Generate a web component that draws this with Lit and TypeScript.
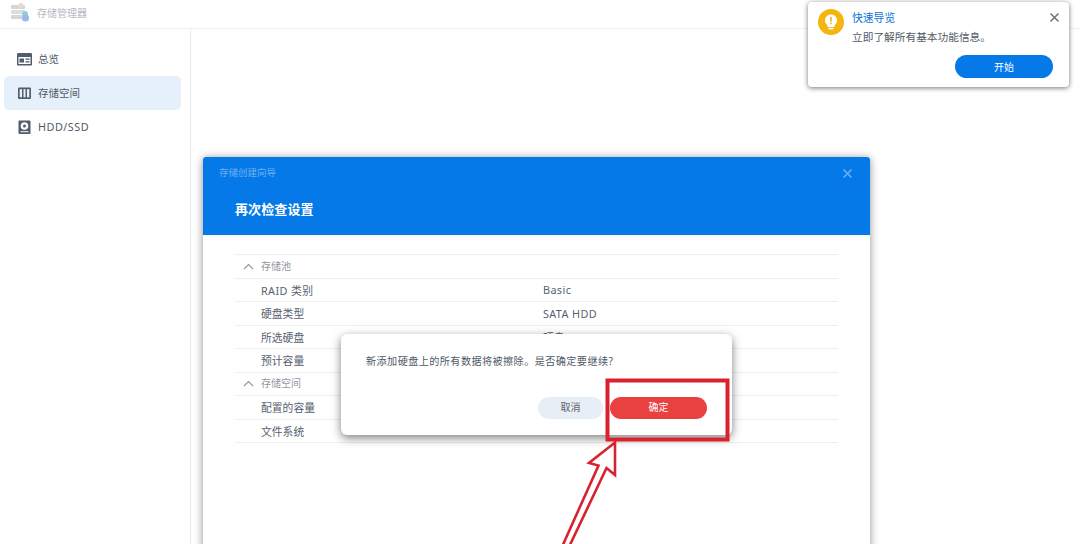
import { LitElement, html, css } from "lit";
import { customElement } from "lit/decorators.js";

@customElement("app-root")
export class AppRoot extends LitElement {
  static styles = css`
    :host { display: block; width: 1080px; height: 544px; position: relative; overflow: hidden; background: #fff; font-family: "Noto Sans", "Noto Sans CJK SC", sans-serif; color: #4f5a68; }
    .app { display: flex; flex-direction: column; height: 544px; }
    .title { height: 28px; flex: none; display: flex; align-items: center; padding-left: 10px; gap: 7px; border-bottom: 1px solid #eef0f2; font-size: 10px; color: #b4b9bf; box-sizing: content-box; }
    .title span { position: relative; top: -2px; }
    .title svg { position: relative; top: -2px; }
    .main { flex: 1; display: flex; }
    .side { border-right: 1px solid #e8ebee; padding: 13px 9px 0 4px; box-sizing: content-box; width: 177px; display: flex; flex-direction: column; }
    .item { height: 34px; display: flex; align-items: center; gap: 6px; padding-left: 12px; font-size: 10.5px; border-radius: 5px; color: #505a66; }
    .item span { position: relative; top: -1px; }
    .item.latin { letter-spacing: .5px; font-size: 10.8px; }
    .item svg { width: 16px; height: 16px; flex: none; }
    .item.on { background: #e5f0fb; }
    .wiz { position: absolute; left: 203px; top: 157px; width: 667px; height: 420px; background: #fff; box-shadow: 0 1px 8px rgba(0,0,0,.45); border-radius: 3px 3px 0 0; }
    .head { height: 78px; background: #0679e8; color: #fff; padding: 10px 16px 0 16px; box-sizing: border-box; position: relative; border-radius: 3px 3px 0 0; }
    .crumb { font-size: 9.5px; color: #6db1f2; line-height: 12px; }
    .h { font-size: 13px; font-weight: 700; margin: 20px 0 0 16px; line-height: 20px; letter-spacing: .1px; }
    .x { position: absolute; right: 16px; top: 10px; width: 13px; height: 13px; }
    .body { padding: 19px 32px 0; }
    .row { height: 23.5px; border-top: 1px solid #eceef0; box-sizing: border-box; display: flex; align-items: center; font-size: 10.8px; color: #566170; padding-left: 26px; position: relative; }
    .row:last-child { border-bottom: 1px solid #eceef0; height: 24.5px; }
    .row.grp { color: #8f97a1; font-size: 10px; }
    .row.grp span { position: relative; top: -1px; }
    .row.grp svg { position: absolute; left: 8px; top: 7.5px; width: 11px; height: 7px; }
    .k { width: 282px; flex: none; }
    .la { letter-spacing: .4px; }
    .dlg { position: absolute; left: 341px; top: 334px; width: 391px; height: 101px; background: #fff; border-radius: 6px; box-shadow: 0 3px 10px rgba(0,0,0,.5); padding: 20px 25px 0; box-sizing: border-box; font-size: 10.1px; letter-spacing: .45px; color: #505a66; line-height: 15px; }
    .btns { display: flex; justify-content: flex-end; gap: 7px; margin-top: 28px; letter-spacing: 0; }
    .btn { height: 22px; padding-bottom: 1px; box-sizing: border-box; border-radius: 11px; display: flex; align-items: center; justify-content: center; font-size: 10px; }
    .cancel { width: 65px; background: #e8eef5; color: #59636f; }
    .ok { width: 97px; background: #e8413f; color: #fff; }
    .toast { position: absolute; left: 808px; top: 2px; width: 261px; height: 85px; background: #fff; border-radius: 4px; box-shadow: 0 1px 5px rgba(0,0,0,.55); }
    .bulb { position: absolute; left: 10px; top: 7px; width: 26px; height: 26px; }
    .t1 { position: absolute; left: 44px; top: 8px; font-size: 10.8px; line-height: 16px; color: #0a72d6; }
    .t2 { position: absolute; left: 44px; top: 27px; font-size: 10.7px; line-height: 16px; color: #505a66; }
    .go { position: absolute; left: 147px; top: 53px; width: 98px; height: 23px; padding-bottom: 1px; box-sizing: border-box; border-radius: 12px; background: #0679e8; color: #fff; font-size: 10px; display: flex; align-items: center; justify-content: center; }
    .tx { position: absolute; left: 241px; top: 10px; width: 11px; height: 11px; }
    .mark { position: absolute; left: 0; top: 0; width: 1080px; height: 544px; pointer-events: none; }
  `;

  render() {
    return html`
      <div class="app">
        <div class="title">
          <svg width="20" height="20" viewBox="0 0 20 20">
            <rect x="1" y="3" width="14" height="4" rx="1" fill="#d4d6d8"/>
            <rect x="1" y="8" width="14" height="4" rx="1" fill="#dcdddf"/>
            <rect x="1" y="13" width="11" height="4" rx="1" fill="#d4d6d8"/>
            <circle cx="11" cy="3.5" r="2.6" fill="#e6dbc6"/>
            <circle cx="15" cy="12" r="3" fill="#8fd0d0"/>
            <circle cx="15.5" cy="16" r="3.6" fill="#9db8ea"/>
          </svg>
          <span>存储管理器</span>
        </div>
        <div class="main">
          <div class="side">
            <div class="item">
              <svg viewBox="0 0 16 16"><rect x="1" y="2" width="15" height="12.5" rx="1.2" fill="#525c6c"/><rect x="2.5" y="6" width="12" height="7" fill="#fff"/><rect x="3.5" y="7.5" width="4.5" height="4" fill="#525c6c"/><rect x="9.5" y="7.5" width="4" height="1.3" fill="#525c6c"/><rect x="9.5" y="10.2" width="4" height="1.3" fill="#525c6c"/></svg>
              <span>总览</span>
            </div>
            <div class="item on">
              <svg viewBox="0 0 16 16"><rect x="2" y="2.5" width="13" height="11.5" rx="1" fill="#525c6c"/><rect x="3.7" y="4.2" width="2.3" height="8.1" fill="#e5f0fb"/><rect x="7.5" y="4.2" width="2" height="8.1" fill="#e5f0fb"/><rect x="11" y="4.2" width="2.3" height="8.1" fill="#e5f0fb"/></svg>
              <span>存储空间</span>
            </div>
            <div class="item latin">
              <svg viewBox="0 0 16 16"><rect x="2.5" y="1.5" width="12" height="13.5" rx="1" fill="#525c6c"/><circle cx="8.5" cy="7" r="3.8" fill="#fff"/><circle cx="8.5" cy="7" r="1.5" fill="#525c6c"/><rect x="4.5" y="12.2" width="8" height="1" fill="#fff"/></svg>
              <span>HDD/SSD</span>
            </div>
          </div>
        </div>
      </div>

      <div class="wiz">
        <div class="head">
          <div class="crumb">存储创建向导</div>
          <div class="h">再次检查设置</div>
          <svg class="x" viewBox="0 0 13 13"><path d="M2.5 2.5l8 8M10.5 2.5l-8 8" stroke="#6db1f2" stroke-width="1.6" fill="none"/></svg>
        </div>
        <div class="body">
          <div class="row grp"><svg viewBox="0 0 11 7"><path d="M1 6l4.5-4.5L10 6" stroke="#8f97a1" stroke-width="1.1" fill="none"/></svg><span>存储池</span></div>
          <div class="row"><span class="k la">RAID 类别</span><span class="la">Basic</span></div>
          <div class="row"><span class="k">硬盘类型</span><span class="la">SATA HDD</span></div>
          <div class="row"><span class="k">所选硬盘</span><span>硬盘 1</span></div>
          <div class="row"><span class="k">预计容量</span></div>
          <div class="row grp"><svg viewBox="0 0 11 7"><path d="M1 6l4.5-4.5L10 6" stroke="#8f97a1" stroke-width="1.1" fill="none"/></svg><span>存储空间</span></div>
          <div class="row"><span class="k">配置的容量</span></div>
          <div class="row"><span class="k">文件系统</span></div>
        </div>
      </div>

      <div class="dlg">
        <div>新添加硬盘上的所有数据将被擦除。是否确定要继续?</div>
        <div class="btns">
          <div class="btn cancel">取消</div>
          <div class="btn ok">确定</div>
        </div>
      </div>

      <div class="toast">
        <svg class="bulb" viewBox="0 0 26 26">
          <circle cx="13" cy="13" r="13" fill="#f5b50f"/>
          <path d="M13 5.5a6 6 0 0 0-3.6 10.8V18h7.2v-1.7A6 6 0 0 0 13 5.5z" fill="#fff"/>
          <rect x="10.5" y="18.8" width="5" height="1.6" fill="#fff"/>
          <rect x="12.2" y="8" width="1.6" height="4.6" fill="#f5b50f"/>
          <rect x="12.2" y="13.6" width="1.6" height="1.6" fill="#f5b50f"/>
        </svg>
        <div class="t1">快速导览</div>
        <div class="t2">立即了解所有基本功能信息。</div>
        <div class="go">开始</div>
        <svg class="tx" viewBox="0 0 11 11"><path d="M1.5 1.5l8 8M9.5 1.5l-8 8" stroke="#68727e" stroke-width="1.5" fill="none"/></svg>
      </div>

      <svg class="mark" viewBox="0 0 1080 544">
        <rect x="607.5" y="380.5" width="120" height="59" fill="none" stroke="#d8222f" stroke-width="4"/>
        <path d="M615 442.5L589 463L598.5 465.5L561.5 548L568.5 548L606.5 468L615 475Z" fill="#fff" stroke="#d8222f" stroke-width="2.6" stroke-linejoin="miter"/>
      </svg>
    `;
  }
}
